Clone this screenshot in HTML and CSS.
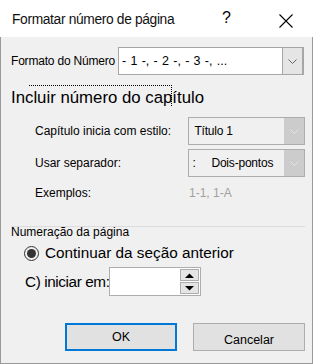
FILE: index.html
```html
<!DOCTYPE html>
<html lang="pt">
<head>
<meta charset="utf-8">
<link rel="stylesheet" href="styles.css">
</head>
<body>
<div class="window">
  <div class="titlebar">
    <span class="title">Formatar número de página</span>
    <span class="help">?</span>
    <svg class="close" width="14" height="14" viewBox="0 0 14 14"><path d="M0.5 0.5L13.5 13.5M13.5 0.5L0.5 13.5" stroke="#000" stroke-width="1.1" fill="none"/></svg>
  </div>
  <div class="content">
    <div class="row-format">
      <span class="lbl">Formato do Número</span>
      <div class="combo combo-main">
        <span class="combo-text">- 1 -, - 2 -, - 3 -, ...</span>
        <span class="combo-btn"><svg width="9" height="5" viewBox="0 0 9 5"><path d="M0.5 0.5L4.5 4.5L8.5 0.5" stroke="#666" fill="none"/></svg></span>
      </div>
    </div>
    <div class="chapter-head"><span class="focus">Incluir número do capítulo</span></div>
    <div class="chapter">
      <div class="crow">
        <span class="clbl">Capítulo inicia com estilo:</span>
        <div class="combo combo-dis">
          <span class="combo-text">Título 1</span>
          <span class="combo-btn"><svg width="9" height="5" viewBox="0 0 9 5"><path d="M0.5 0.5L4.5 4.5L8.5 0.5" stroke="#e6e6e6" fill="none"/></svg></span>
        </div>
      </div>
      <div class="crow">
        <span class="clbl">Usar separador:</span>
        <div class="combo combo-dis">
          <span class="combo-text"><span class="sep">:</span>Dois-pontos</span>
          <span class="combo-btn"><svg width="9" height="5" viewBox="0 0 9 5"><path d="M0.5 0.5L4.5 4.5L8.5 0.5" stroke="#e6e6e6" fill="none"/></svg></span>
        </div>
      </div>
      <div class="crow erow">
        <span class="clbl">Exemplos:</span>
        <span class="examples">1-1, 1-A</span>
      </div>
    </div>
    <div class="group-line"></div>
    <div class="group-title">Numeração da página</div>
    <div class="radio-row">
      <span class="radio"><span class="dot"></span></span>
      <span class="big">Continuar da seção anterior</span>
    </div>
    <div class="start-row">
      <span class="big start-lbl">C) iniciar em:</span>
      <div class="spin">
        <span class="spin-field"></span>
        <span class="spin-btns">
          <span class="sbtn"><svg width="9" height="5" viewBox="0 0 9 5"><path d="M0 5L4.5 0.5L9 5Z" fill="#000"/></svg></span>
          <span class="sbtn"><svg width="9" height="5" viewBox="0 0 9 5"><path d="M0 0L4.5 4.5L9 0Z" fill="#000"/></svg></span>
        </span>
      </div>
    </div>
    <div class="buttons">
      <button class="btn btn-ok">OK</button>
      <button class="btn btn-cancel">Cancelar</button>
    </div>
  </div>
</div>
</body>
</html>
```
FILE: styles.css
```css
* { box-sizing: border-box; }
html, body { margin: 0; padding: 0; }
body {
  font-family: "Liberation Sans", Arial, sans-serif;
  color: #000;
  background: #fff;
}
.window {
  width: 313px;
  height: 364px;
  border: 1px solid #9a9a9a;
  border-top: none;
  background: #f0f0f0;
  display: flex;
  flex-direction: column;
}
.titlebar {
  height: 37px;
  background: #fff;
  display: flex;
  align-items: center;
  padding-left: 12px;
  margin: 0 -1px;
  width: 313px;
  flex: none;
}
.title {
  font-size: 13.8px;
  letter-spacing: -0.35px;
  padding-top: 1px;
  flex: 1;
  color: #111;
}
.help {
  font-size: 16px;
  margin-right: 48px;
  padding-bottom: 1px;
}
.close { margin-right: 20px; margin-top: 4px; }
.content {
  padding: 10px 7px 0 10px;
}
.row-format {
  display: flex;
  align-items: center;
  height: 28px;
}
.lbl {
  font-size: 12px;
  letter-spacing: -0.2px;
  width: 107px;
  white-space: nowrap;
}
.combo {
  display: flex;
  height: 28px;
  border: 1px solid #a6a6a6;
}
.combo-main {
  width: 186px;
  background: #fff;
}
.combo-text {
  flex: 1;
  font-size: 12px;
  display: flex;
  align-items: center;
  padding-left: 3px;
  white-space: pre;
}
.combo-main .combo-text { font-size: 12.5px; word-spacing: 0.8px; }
.combo-btn {
  width: 21px;
  display: flex;
  align-items: center;
  justify-content: center;
  background: #e5e5e5;
  border-left: 1px solid #a6a6a6;
}
.combo-main .combo-btn {
  border: 1px solid #a6a6a6;
  border-right: 2px solid #a6a6a6;
  margin: -1px -1px -1px 0;
  width: 22px;
}
.chapter-head {
  margin-top: 10px;
  height: 22px;
}
.focus {
  display: inline-block;
  font-size: 16.8px;
  padding-top: 2px;
  border-top: 1px dotted #000;
  border-right: 1px dotted #000;
  margin-left: 18px;
  width: 143px;
  white-space: nowrap;
  text-indent: -18px;
  height: 21px;
}
.chapter {
  padding-left: 24px;
  margin-top: 10px;
}
.crow {
  display: flex;
  align-items: center;
  margin-bottom: 4px;
}
.clbl {
  font-size: 12px;
  width: 154px;
}
.combo-dis {
  width: 117px;
  background: #f0f0f0;
  border-color: #adadad;
}
.combo-dis .combo-text { padding-left: 5px; letter-spacing: -0.2px; }
.combo-dis .combo-btn {
  background: #cccccc;
  border-left: none;
  width: 20px;
}
.sep { width: 19px; display: inline-block; margin-left: -2px; }
.erow { margin-top: 9px; margin-bottom: 0; }
.examples {
  font-size: 12px;
  color: #a0a0a0;
}
.group-line {
  margin-top: 26px;
  height: 1px;
  background: #dcdcdc;
}
.group-title {
  font-size: 12px;
  margin-top: -2px;
  height: 14px;
  line-height: 14px;
}
.radio-row {
  display: flex;
  align-items: center;
  padding-left: 13px;
  margin-top: 3px;
  height: 22px;
}
.radio {
  width: 15px;
  height: 15px;
  border: 1px solid #333;
  border-radius: 50%;
  display: flex;
  align-items: center;
  justify-content: center;
  margin-right: 6px;
}
.dot {
  width: 9px;
  height: 9px;
  border-radius: 50%;
  background: #333;
}
.big { font-size: 15.3px; }
.start-lbl {
  letter-spacing: -0.4px;
  width: 84px;
  white-space: nowrap;
}
.start-row {
  display: flex;
  align-items: center;
  padding-left: 14px;
  margin-top: 3px;
  height: 29px;
}
.spin {
  display: flex;
  width: 92px;
  height: 29px;
  border: 1px solid #adadad;
  background: #fff;
}
.spin-field { flex: 1; }
.spin-btns {
  display: flex;
  flex-direction: column;
  width: 20px;
  padding: 1px 1px 1px 0;
  gap: 1px;
}
.sbtn {
  flex: 1;
  background: #e5e5e5;
  border: 1px solid #adadad;
  display: flex;
  align-items: center;
  justify-content: center;
}
.buttons {
  display: flex;
  gap: 16px;
  margin-top: 27px;
  padding-left: 54px;
}
.btn {
  font-family: "Liberation Sans", Arial, sans-serif;
  font-size: 12.5px;
  width: 112px;
  height: 28px;
  background: #e1e1e1;
  border: 1px solid #adadad;
  color: #000;
  padding: 0;
}
.btn-ok { border: 2px solid #0078d7; }
.btn-cancel { padding-top: 6px; }
```
